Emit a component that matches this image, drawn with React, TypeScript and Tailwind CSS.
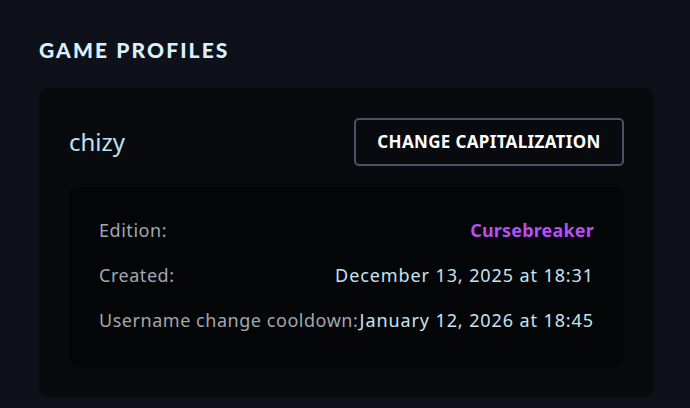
import React from "react";

const rows = [
  { label: "Edition:", value: "Cursebreaker", accent: true },
  { label: "Created:", value: "December 13, 2025 at 18:31" },
  { label: "Username change cooldown:", value: "January 12, 2026 at 18:45" },
];

export default function App() {
  return (
    <div
      className="min-h-[408px] w-full bg-[#0e1119] px-[39px] pt-[36px]"
      style={{ fontFamily: "'Noto Sans', sans-serif" }}
    >
      <h2
        className="text-[21px] font-black leading-[28px] tracking-[0.1em] text-[#dcefff]"
        style={{ fontFamily: "Lato, sans-serif" }}
      >
        GAME PROFILES
      </h2>
      <div className="mt-[24px] w-[615px] rounded-[10px] bg-[#080a0e] p-[30px]">
        <div className="flex items-center justify-between">
          <div className="text-[24px] leading-[32px] text-[#bfe0f3]">chizy</div>
          <button className="h-[48px] w-[270px] rounded-[5px] border-2 border-[#4b5169] text-[17px] font-bold tracking-[0.02em] text-white">
            CHANGE CAPITALIZATION
          </button>
        </div>
        <div className="mt-[21px] flex flex-col gap-[19px] rounded-[10px] bg-[#040507] px-[30px] pb-[34px] pt-[30px]">
          {rows.map((r) => (
            <div
              key={r.label}
              className="flex items-center justify-between text-[18px] leading-[26px]"
            >
              <span className="tracking-[0.03em] text-[#a3a7ae]">{r.label}</span>
              <span
                className={
                  r.accent
                    ? "font-bold tracking-[0.01em] text-[#b84ff2]"
                    : "tracking-[0.05em] text-[#c9e2f1]"
                }
              >
                {r.value}
              </span>
            </div>
          ))}
        </div>
      </div>
    </div>
  );
}
